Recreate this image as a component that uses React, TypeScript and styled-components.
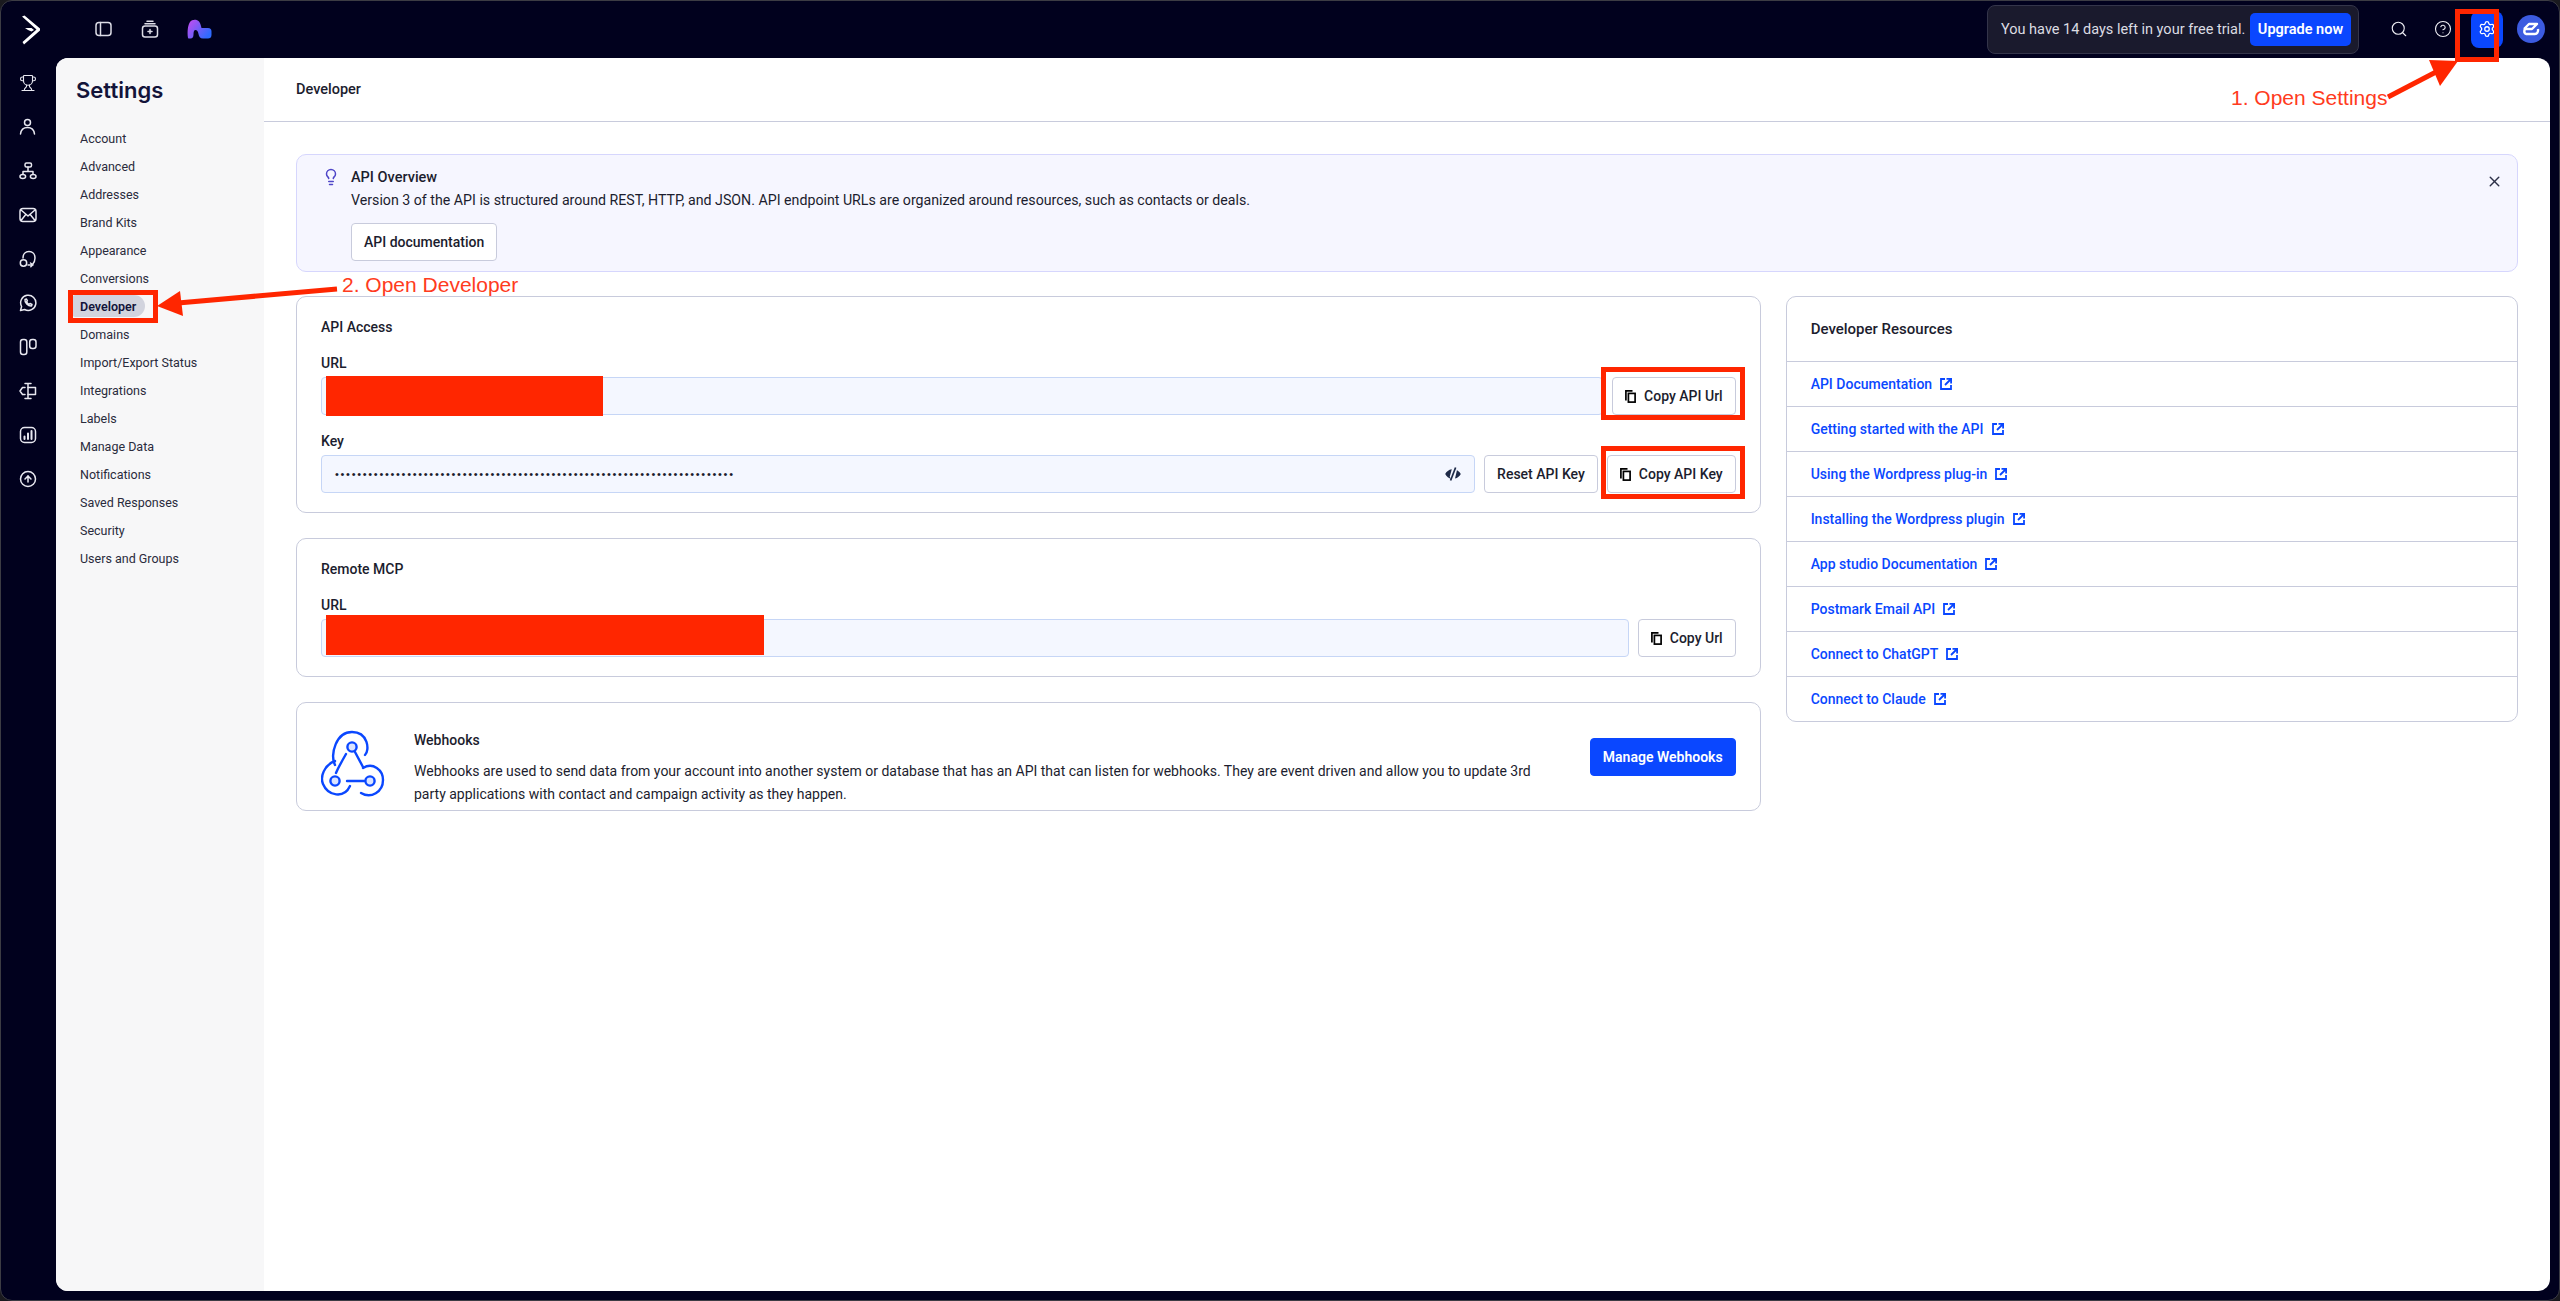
import React from "react";
import styled, { createGlobalStyle } from "styled-components";
import { Trophy, Search, CircleHelp, Settings as Gear, X, Lightbulb, CircleArrowUp } from "lucide-react";

const UI_FONT = `"Roboto", "Liberation Sans", sans-serif`;

const GlobalStyle = createGlobalStyle`
  html, body { margin: 0; padding: 0; background: #1a1a1f; }
  * { box-sizing: border-box; }
  body { font-family: ${UI_FONT}; color: #1c1d2e; }
`;

const Frame = styled.div`
  position: relative;
  width: 2560px;
  height: 1301px;
  display: flex;
  flex-direction: column;
  background: #01011e;
  border: 1px solid #3c3c44;
  border-radius: 12px;
  overflow: hidden;
`;

const TopBar = styled.header`
  flex: none;
  height: 57px;
  display: flex;
  align-items: center;
  padding: 0 14px 0 20px;
`;

const TopLeft = styled.div`
  display: flex;
  align-items: center;
  gap: 28px;
  margin-left: 54px;
  margin-top: -2px;
`;

const TopRight = styled.div`
  margin-left: auto;
  display: flex;
  align-items: center;
  margin-top: 9px;
  margin-bottom: 0;
  transform: translateY(-5px);
`;

const TrialPill = styled.div`
  width: 372px;
  height: 49px;
  display: flex;
  align-items: center;
  justify-content: space-between;
  padding: 0 7px 0 13px;
  background: #1a1a2d;
  border: 1px solid #34354a;
  border-radius: 8px;
  color: #dcdce2;
  font-size: 14.5px;
`;

const UpgradeButton = styled.button`
  width: 101px;
  height: 33px;
  border: 0;
  border-radius: 5px;
  background: #0a47ff;
  color: #fff;
  font: 600 14.5px ${UI_FONT};
`;

const TopIcon = styled.div`
  width: 32px;
  height: 37px;
  display: flex;
  align-items: center;
  justify-content: center;
  color: #eeeef4;
`;

const ActiveIcon = styled(TopIcon)`
  background: #0a47ff;
  border-radius: 8px;
  margin-left: 12px;
  color: #fff;
`;

const Avatar = styled.div`
  width: 28px;
  height: 28px;
  margin-left: 14px;
  border-radius: 50%;
  background: #3c5be0;
  display: flex;
  align-items: center;
  justify-content: center;
`;

const Body = styled.div`
  flex: 1;
  min-height: 0;
  display: flex;
`;

const Rail = styled.nav`
  flex: none;
  width: 55px;
  display: flex;
  flex-direction: column;
  align-items: center;
  gap: 24px;
  padding: 15px 2px 0 0;
  color: #e8e8f0;
`;

const RailSlot = styled.div`
  width: 20px;
  height: 20px;
  display: flex;
  align-items: center;
  justify-content: center;
`;

const Panel = styled.div`
  flex: 1;
  min-width: 0;
  display: flex;
  margin: 0 9px 9px 0;
  background: #fff;
  border-radius: 12px;
  overflow: hidden;
`;

const Sidebar = styled.aside`
  flex: none;
  width: 208px;
  background: #f7f7f8;
  padding: 18px 0 0 20px;
`;

const SidebarTitle = styled.h1`
  margin: 0 0 23px;
  font: 600 22px/28px "Inter", sans-serif;
  color: #13143a;
`;

const SideList = styled.div`
  display: flex;
  flex-direction: column;
  align-items: flex-start;
  gap: 6px;
  margin-left: -4px;
`;

const SideItem = styled.a<{ $active?: boolean }>`
  height: 22px;
  display: flex;
  align-items: center;
  padding: 0 9px 0 8px;
  font-size: 12.5px;
  font-weight: ${(p) => (p.$active ? 600 : 400)};
  color: ${(p) => (p.$active ? "#13143a" : "#2a2b3c")};
  background: ${(p) => (p.$active ? "#d2d4de" : "transparent")};
  border-radius: 4px 12px 12px 4px;
`;

const Main = styled.main`
  flex: 1;
  min-width: 0;
`;

const PageHeader = styled.div`
  height: 64px;
  display: flex;
  align-items: center;
  padding: 0 32px;
  border-bottom: 1px solid #c8cbdc;
  font-size: 14.5px;
  font-weight: 500;
`;

const Content = styled.div`
  padding: 32px;
  display: flex;
  flex-direction: column;
  gap: 24px;
`;

const Banner = styled.section`
  position: relative;
  height: 118px;
  display: flex;
  gap: 11px;
  padding: 13px 25px;
  background: #f6f6ff;
  border: 1px solid #d6d6fd;
  border-radius: 10px;
`;

const BannerTitle = styled.div`
  font-size: 14.5px;
  font-weight: 500;
  line-height: 20px;
`;

const BannerText = styled.div`
  font-size: 14.2px;
  line-height: 20px;
  margin-top: 2px;
`;

const CloseButton = styled.div`
  position: absolute;
  top: 18px;
  right: 14px;
  color: #2c3048;
  display: flex;
`;

const Columns = styled.div`
  display: grid;
  grid-template-columns: 2fr 1fr;
  gap: 25px;
  align-items: start;
`;

const LeftColumn = styled.div`
  display: flex;
  flex-direction: column;
  gap: 25px;
`;

const Card = styled.section`
  border: 1px solid #c8cbdc;
  border-radius: 10px;
  padding: 20px 24px 19px;
`;

const CardTitle = styled.h2`
  margin: 0 0 17px;
  font-size: 14px;
  line-height: 20px;
  font-weight: 500;
`;

const Field = styled.div`
  & + & {
    margin-top: 17px;
  }
`;

const FieldLabel = styled.label`
  display: block;
  margin-bottom: 5px;
  font-size: 14px;
  line-height: 18px;
  font-weight: 500;
`;

const FieldRow = styled.div`
  display: flex;
  align-items: center;
  gap: 9px;
`;

const InputBox = styled.div`
  flex: 1;
  min-width: 0;
  height: 38px;
  display: flex;
  align-items: center;
  justify-content: space-between;
  padding: 0 13px;
  background: #f4f7ff;
  border: 1px solid #c6d6f6;
  border-radius: 4px;
`;

const MaskedKey = styled.span`
  font: 400 11px/1 "Liberation Sans", sans-serif;
  letter-spacing: 1.7px;
  color: #1c1d2e;
`;

const Button = styled.button<{ $primary?: boolean }>`
  flex: none;
  height: 38px;
  display: inline-flex;
  align-items: center;
  gap: 8px;
  padding: 0 12px;
  background: ${(p) => (p.$primary ? "#0a47ff" : "#fff")};
  border: 1px solid ${(p) => (p.$primary ? "#0a47ff" : "#c8cbdc")};
  border-radius: 4px;
  color: ${(p) => (p.$primary ? "#fff" : "#1c1d2e")};
  font: ${(p) => (p.$primary ? 600 : 500)} 14px ${UI_FONT};
`;

const WebhookCard = styled.section`
  height: 109px;
  display: flex;
  align-items: center;
  gap: 29px;
  padding: 0 24px;
  border: 1px solid #c8cbdc;
  border-radius: 10px;
`;

const WebhookIconWrap = styled.div`
  flex: none;
  margin-top: 14px;
  display: flex;
`;

const WebhookText = styled.div`
  flex: 1;
  margin-top: 24px;
`;

const WebhookTitle = styled.div`
  font-size: 14px;
  line-height: 18px;
  font-weight: 500;
  margin-bottom: 11px;
`;

const WebhookCopy = styled.p`
  margin: 0;
  max-width: 1140px;
  font-size: 14px;
  line-height: 23px;
`;

const ResourceCard = styled.section`
  border: 1px solid #c8cbdc;
  border-radius: 10px;
`;

const ResourceHeader = styled.h2`
  margin: 0;
  height: 64px;
  display: flex;
  align-items: center;
  padding: 0 24px;
  font-size: 15px;
  font-weight: 500;
`;

const ResourceRow = styled.a`
  height: 45px;
  display: flex;
  align-items: center;
  gap: 8px;
  padding: 0 24px;
  border-top: 1px solid #c8cbdc;
  color: #0a47ff;
  font-size: 14px;
  font-weight: 500;
`;

/* annotations painted over the screenshot */
const Redaction = styled.div<{ $x: number; $y: number; $w: number; $h: number }>`
  position: absolute;
  left: ${(p) => p.$x}px;
  top: ${(p) => p.$y}px;
  width: ${(p) => p.$w}px;
  height: ${(p) => p.$h}px;
  background: #ff2600;
`;

const CalloutBox = styled(Redaction)`
  background: transparent;
  border: 5px solid #ff2600;
`;

const CalloutLabel = styled.div<{ $x: number; $y: number }>`
  position: absolute;
  left: ${(p) => p.$x}px;
  top: ${(p) => p.$y}px;
  font: 400 21px/26px "Liberation Sans", sans-serif;
  color: #ff3b20;
  white-space: nowrap;
`;

const ArrowLayer = styled.svg`
  position: absolute;
  left: -1px;
  top: -1px;
  pointer-events: none;
`;

const line = { fill: "none", stroke: "currentColor", strokeWidth: 1.5, strokeLinecap: "round", strokeLinejoin: "round" } as const;

const ActiveLogo = () => (
  <svg width="20" height="30" viewBox="0 0 20 30">
    <path d="M1 1.5 L3.5 0.5 L19 13.5 V15.5 L3 29.5 L1.5 27 L15.5 14.6 Z" fill="#fff" />
    <path d="M4 13 L10.5 13 L13 15 L10.5 16.5 L7 15 Z" fill="#fff" />
  </svg>
);

const SidePanelIcon = () => (
  <svg width="18" height="16" viewBox="0 0 18 16" {...line} color="#dcdce6">
    <rect x="1" y="1.5" width="15" height="13" rx="3" />
    <path d="M5.5 1.5 V14.5" />
  </svg>
);

const BoxIcon = () => (
  <svg width="18" height="18" viewBox="0 0 18 18" {...line} color="#dcdce6">
    <path d="M6 1.2 H12 M4 3.8 H14" />
    <rect x="1.5" y="6" width="15" height="11" rx="2.5" />
    <path d="M9 9.5 V13.5 M7 11.5 H11" />
  </svg>
);

const ProductLogo = () => (
  <svg width="25" height="20" viewBox="0 0 25 20">
    <defs>
      <linearGradient id="pl" x1="0" y1="0" x2="1" y2="0.6">
        <stop offset="0" stopColor="#c94bf0" />
        <stop offset="1" stopColor="#2f6bff" />
      </linearGradient>
    </defs>
    <path d="M1 19 C0 12 1 6 3 3 C5 0 10 0 12 2.5 C13.5 4.5 14 7 14.5 9 H21 C23.5 9 24.5 10.5 24.5 12.5 V16 C24.5 18.5 23 19.5 21 19.5 H16 C13 19.5 12 17.5 11.5 15 C11 12.5 10 11 8.5 11 C7 11 6.5 13 6.5 15.5 C6.5 18 5.5 19.5 3.5 19.5 C2 19.5 1 19.5 1 19 Z" fill="url(#pl)" />
  </svg>
);

const AvatarGlyph = () => (
  <svg width="18" height="14" viewBox="0 0 18 14" fill="none" stroke="#fff" strokeWidth="2.4" strokeLinejoin="round">
    <path d="M2 7 L7 2 H15 L10 7 H4 C2 7 1.5 11 4 12 H13 C15 12 16.5 10 16 7" />
  </svg>
);

const railIcons = [
  <Trophy key="t" size={18} strokeWidth={1.5} />,
  <svg key="u" width="17" height="18" viewBox="0 0 17 18" {...line}><circle cx="8.5" cy="4.5" r="3" /><path d="M1.5 16 C2 11.5 5 9.5 8.5 9.5 C12 9.5 15 11.5 15.5 16" /></svg>,
  <svg key="o" width="18" height="18" viewBox="0 0 18 18" {...line}><rect x="6" y="1" width="6.5" height="4" rx="1.5" /><path d="M9 5 V9 M4 12 V9.5 H14 V12" /><ellipse cx="3.8" cy="14.5" rx="2.8" ry="2" /><ellipse cx="14.2" cy="14.5" rx="2.8" ry="2" /></svg>,
  <svg key="m" width="18" height="16" viewBox="0 0 18 16" {...line}><rect x="1" y="1.5" width="16" height="13" rx="3" /><path d="M2 3 L9 9 L16 3 M2 13.5 L6.8 7.5 M16 13.5 L11.2 7.5" /></svg>,
  <svg key="c" width="18" height="18" viewBox="0 0 18 18" {...line}><path d="M4 8 C4 4 6.5 1.5 10 1.5 C13.5 1.5 16 4 16 8 C16 11 15 13 13.5 14.5" /><circle cx="4.5" cy="13" r="3.2" /><path d="M9 15 H14 M11.5 13 L13.8 14.8 L11.8 16.8" /></svg>,
  <svg key="w" width="18" height="18" viewBox="0 0 18 18" {...line}><path d="M1.5 16.5 L2.6 12.5 A7.6 7.6 0 1 1 5.6 15.5 Z" /><path d="M6 5.5 C5.5 8.5 9 12.3 12.5 12 L13 10.5 L11 9.5 L10 10.3 C9 9.8 8 8.8 7.6 7.7 L8.4 6.8 L7.5 5 Z" /></svg>,
  <svg key="k" width="18" height="18" viewBox="0 0 18 18" {...line}><rect x="1.5" y="1.5" width="6.3" height="15" rx="2.5" /><rect x="10.7" y="1.5" width="6.3" height="9" rx="2.5" /></svg>,
  <svg key="s" width="18" height="18" viewBox="0 0 18 18" {...line}><path d="M9 1.5 V16.5 M6 1.5 H12 M6 16.5 H12" /><path d="M6 5.5 H3.5 L1 9 L3.5 12.5 H6" /><path d="M9 5.5 H16.5 V12.5 H9" /></svg>,
  <svg key="b" width="18" height="18" viewBox="0 0 18 18" {...line}><rect x="1.5" y="1.5" width="15" height="15" rx="4" /><path d="M5.5 13 V10.5 M9 13 V7.5 M12.5 13 V5" strokeWidth="2" /></svg>,
  <CircleArrowUp key="a" size={18} strokeWidth={2} />,
];

const CopyIcon = () => (
  <svg width="11" height="13" viewBox="0 0 11 13" fill="none" stroke="#000" strokeWidth="1.7">
    <path d="M0.9 10.5 V0.9 H7.5" />
    <rect x="3.4" y="3.4" width="6.7" height="8.7" />
  </svg>
);

const EyeOffIcon = () => (
  <svg width="16" height="14" viewBox="0 0 16 14" fill="#1e2a48">
    <path d="M9.5 2.2 C12 2.6 14.5 4.6 15.8 7 C14.8 9 12.6 11 10 11.6 L12 3 Z M6.2 11.8 C4 11.3 1.4 9.5 0.2 7 C1.4 4.6 3.8 2.6 6.8 2.2 L4.7 10 Z" />
    <path d="M9.8 0.3 L11.4 0.8 L6.4 13.7 L4.8 13.2 Z" />
  </svg>
);

const ExternalIcon = () => (
  <svg width="12" height="12" viewBox="0 0 12 12" fill="none" stroke="currentColor" strokeWidth="1.8">
    <path d="M5 1 H1 V11 H11 V7" />
    <path d="M6.5 0.9 H11.1 V5.5 M11 1 L5 7" />
  </svg>
);

const WebhookIcon = () => (
  <svg width="64" height="68" viewBox="0 0 64 68" fill="none" stroke="#0a47ff" strokeWidth="2.4" strokeLinecap="round">
    <path d="M14 35 C9 24 15 2 31 2 C47 2 49 20 44 25" />
    <circle cx="31" cy="17" r="4.6" fill="#dbe4ff" />
    <path d="M25 24 C21 31 17 38 15 43 M34 22 L42 37" />
    <path d="M14 31 C3 35 -1 47 2 54 C7 66 23 69 29 56" />
    <circle cx="14" cy="51" r="4.6" fill="#dbe4ff" />
    <path d="M26 51 H43" />
    <circle cx="49" cy="51" r="4.6" fill="#dbe4ff" />
    <path d="M42 38 C52 32 62 40 62 50 C62 62 50 69 40 63" />
  </svg>
);

const settingsLinks = [
  "Account", "Advanced", "Addresses", "Brand Kits", "Appearance", "Conversions", "Developer", "Domains",
  "Import/Export Status", "Integrations", "Labels", "Manage Data", "Notifications", "Saved Responses", "Security", "Users and Groups",
];

const resources = [
  "API Documentation", "Getting started with the API", "Using the Wordpress plug-in", "Installing the Wordpress plugin",
  "App studio Documentation", "Postmark Email API", "Connect to ChatGPT", "Connect to Claude",
];

export default function App() {
  return (
    <Frame>
      <GlobalStyle />
      <TopBar>
        <ActiveLogo />
        <TopLeft>
          <SidePanelIcon />
          <BoxIcon />
          <ProductLogo />
        </TopLeft>
        <TopRight>
          <TrialPill>
            You have 14 days left in your free trial.
            <UpgradeButton>Upgrade now</UpgradeButton>
          </TrialPill>
          <TopIcon style={{ marginLeft: 24 }}><Search size={18} strokeWidth={1.5} /></TopIcon>
          <TopIcon style={{ marginLeft: 12 }}><CircleHelp size={18} strokeWidth={1.5} /></TopIcon>
          <ActiveIcon><Gear size={18} strokeWidth={1.7} /></ActiveIcon>
          <Avatar><AvatarGlyph /></Avatar>
        </TopRight>
      </TopBar>
      <Body>
        <Rail>
          {railIcons.map((icon, i) => (
            <RailSlot key={i}>{icon}</RailSlot>
          ))}
        </Rail>
        <Panel>
          <Sidebar>
            <SidebarTitle>Settings</SidebarTitle>
            <SideList>
              {settingsLinks.map((name) => (
                <SideItem key={name} $active={name === "Developer"}>{name}</SideItem>
              ))}
            </SideList>
          </Sidebar>
          <Main>
            <PageHeader>Developer</PageHeader>
            <Content>
              <Banner>
                <Lightbulb size={18} color="#4f46c8" strokeWidth={2} />
                <div>
                  <BannerTitle>API Overview</BannerTitle>
                  <BannerText>
                    Version 3 of the API is structured around REST, HTTP, and JSON. API endpoint URLs are organized around resources, such as contacts or deals.
                  </BannerText>
                  <Button style={{ marginTop: 13 }}>API documentation</Button>
                </div>
                <CloseButton><X size={17} strokeWidth={2} /></CloseButton>
              </Banner>
              <Columns>
                <LeftColumn>
                  <Card>
                    <CardTitle>API Access</CardTitle>
                    <Field>
                      <FieldLabel>URL</FieldLabel>
                      <FieldRow>
                        <InputBox />
                        <Button><CopyIcon />Copy API Url</Button>
                      </FieldRow>
                    </Field>
                    <Field>
                      <FieldLabel>Key</FieldLabel>
                      <FieldRow>
                        <InputBox>
                          <MaskedKey>{"•".repeat(72)}</MaskedKey>
                          <EyeOffIcon />
                        </InputBox>
                        <Button>Reset API Key</Button>
                        <Button><CopyIcon />Copy API Key</Button>
                      </FieldRow>
                    </Field>
                  </Card>
                  <Card>
                    <CardTitle>Remote MCP</CardTitle>
                    <Field>
                      <FieldLabel>URL</FieldLabel>
                      <FieldRow>
                        <InputBox />
                        <Button><CopyIcon />Copy Url</Button>
                      </FieldRow>
                    </Field>
                  </Card>
                  <WebhookCard>
                    <WebhookIconWrap><WebhookIcon /></WebhookIconWrap>
                    <WebhookText>
                      <WebhookTitle>Webhooks</WebhookTitle>
                      <WebhookCopy>
                        Webhooks are used to send data from your account into another system or database that has an API that can listen for webhooks. They are event driven and allow you to update 3rd party applications with contact and campaign activity as they happen.
                      </WebhookCopy>
                    </WebhookText>
                    <Button $primary>Manage Webhooks</Button>
                  </WebhookCard>
                </LeftColumn>
                <ResourceCard>
                  <ResourceHeader>Developer Resources</ResourceHeader>
                  {resources.map((name) => (
                    <ResourceRow key={name}>{name}<ExternalIcon /></ResourceRow>
                  ))}
                </ResourceCard>
              </Columns>
            </Content>
          </Main>
        </Panel>
      </Body>

      <Redaction $x={325} $y={375} $w={277} $h={40} />
      <Redaction $x={325} $y={614} $w={438} $h={40} />
      <CalloutBox $x={2454} $y={8} $w={44} $h={53} />
      <CalloutBox $x={67} $y={289} $w={90} $h={33} />
      <CalloutBox $x={1600} $y={366} $w={144} $h={53} />
      <CalloutBox $x={1600} $y={445} $w={144} $h={53} />
      <CalloutLabel $x={2230} $y={84}>1. Open Settings</CalloutLabel>
      <CalloutLabel $x={341} $y={271}>2. Open Developer</CalloutLabel>
      <ArrowLayer width="2560" height="1301" viewBox="0 0 2560 1301">
        <path d="M2388 97 L2436 72" stroke="#ff2600" strokeWidth="5" />
        <path d="M2458 61 L2429 60 L2440 86 Z" fill="#ff2600" />
        <path d="M337 289 L178 303" stroke="#ff2600" strokeWidth="5" />
        <path d="M157 306 L180 291 L183 316 Z" fill="#ff2600" />
      </ArrowLayer>
    </Frame>
  );
}
